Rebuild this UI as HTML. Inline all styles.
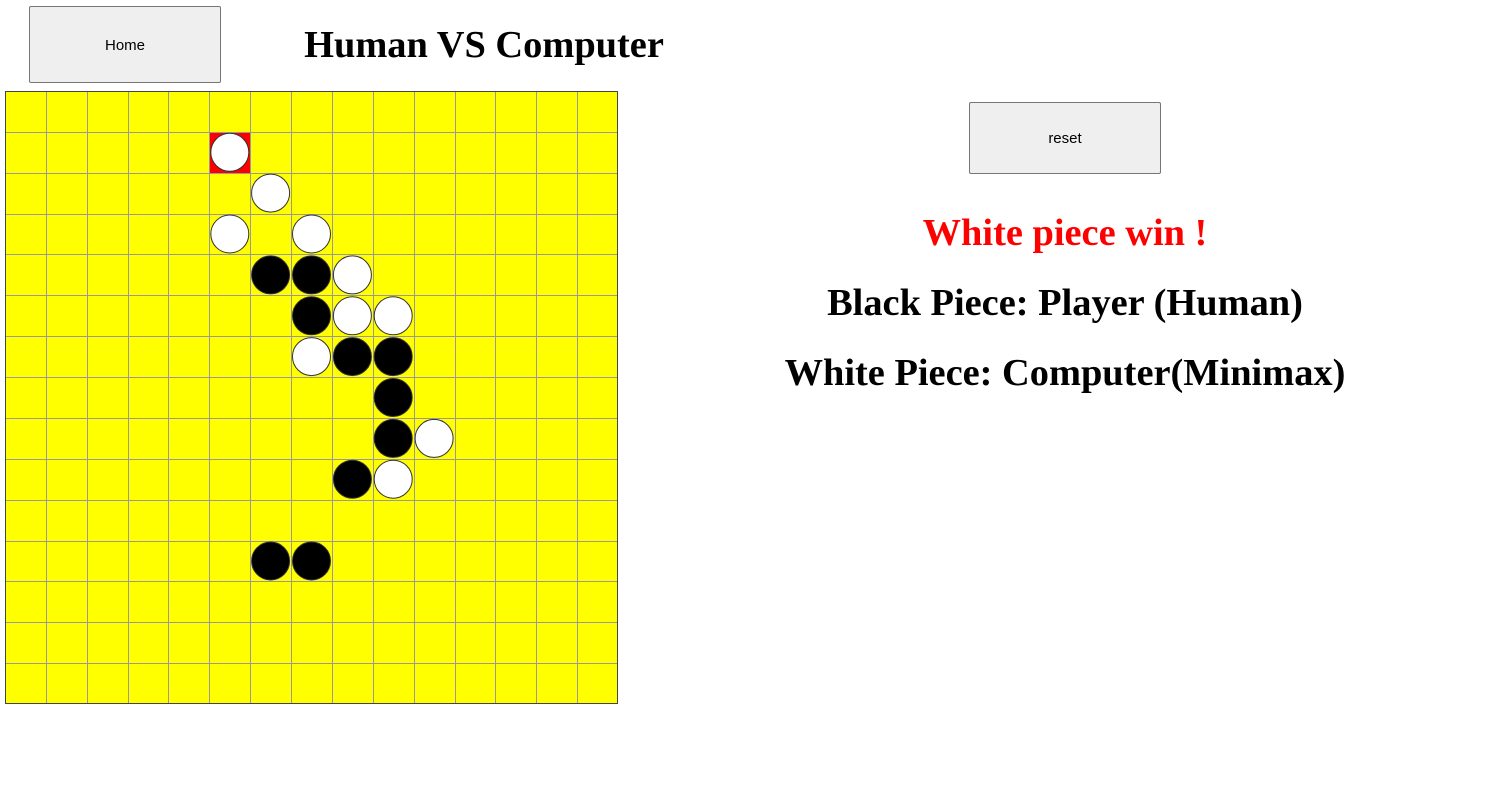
<!DOCTYPE html>
<html><head><style>
body{margin:0;background:#fff;width:1492px;height:811px;position:relative;overflow:hidden;font-family:"Liberation Serif",serif}
.btn{position:absolute;background:#efefef;border:1px solid #767676;border-radius:2px;font-family:"Liberation Sans",sans-serif;font-size:15px;color:#000;display:flex;align-items:center;justify-content:center;box-sizing:border-box}
.t{position:absolute;font-weight:bold;white-space:nowrap;text-align:center}
</style></head><body>
<div class="btn" style="left:29px;top:6px;width:192px;height:77px;padding-top:2px">Home</div>
<div class="t" style="left:284px;width:400px;top:23px;font-size:38.4px;line-height:44px">Human VS Computer</div>
<div class="btn" style="left:969px;top:102px;width:192px;height:72px">reset</div>
<div class="t" style="left:765px;width:600px;top:211px;font-size:38.4px;line-height:44px;color:#f00">White piece win !</div>
<div class="t" style="left:765px;width:600px;top:281px;font-size:38.4px;line-height:44px">Black Piece: Player (Human)</div>
<div class="t" style="left:765px;width:600px;top:351px;font-size:38.4px;line-height:44px">White Piece: Computer(Minimax)</div>
<svg style="position:absolute;left:0;top:0" width="700" height="720" id="b"></svg>
<script>
var s='<rect x="5.5" y="91.5" width="612" height="612" fill="#ff0" stroke="#444" stroke-width="1"/>';
var p=40.87;
for(var i=1;i<15;i++){var v=5.5+Math.round(p*i);var h=91.5+Math.round(p*i);
s+='<line x1="'+v+'" y1="91.5" x2="'+v+'" y2="703.5" stroke="#999"/>';
s+='<line x1="5.5" y1="'+h+'" x2="617.5" y2="'+h+'" stroke="#999"/>';}
s+='<rect x="5.5" y="91.5" width="612" height="612" fill="none" stroke="#444"/>';
s+='<rect x="210" y="133" width="40" height="40" fill="#f00"/>';
var W=[[5,1],[6,2],[5,3],[7,3],[8,4],[8,5],[9,5],[7,6],[10,8],[9,9]];
var B=[[6,4],[7,4],[7,5],[8,6],[9,6],[9,7],[9,8],[8,9],[6,11],[7,11]];
function c(a,f){var x=5+p*a[0]+20.4,y=91+p*a[1]+20.4;s+='<circle cx="'+x.toFixed(1)+'" cy="'+y.toFixed(1)+'" r="19" fill="'+f+'" stroke="#333" stroke-width="1"/>';}
W.forEach(function(a){c(a,'#fff')});B.forEach(function(a){c(a,'#000')});
document.getElementById('b').innerHTML=s;
</script>
</body></html>
